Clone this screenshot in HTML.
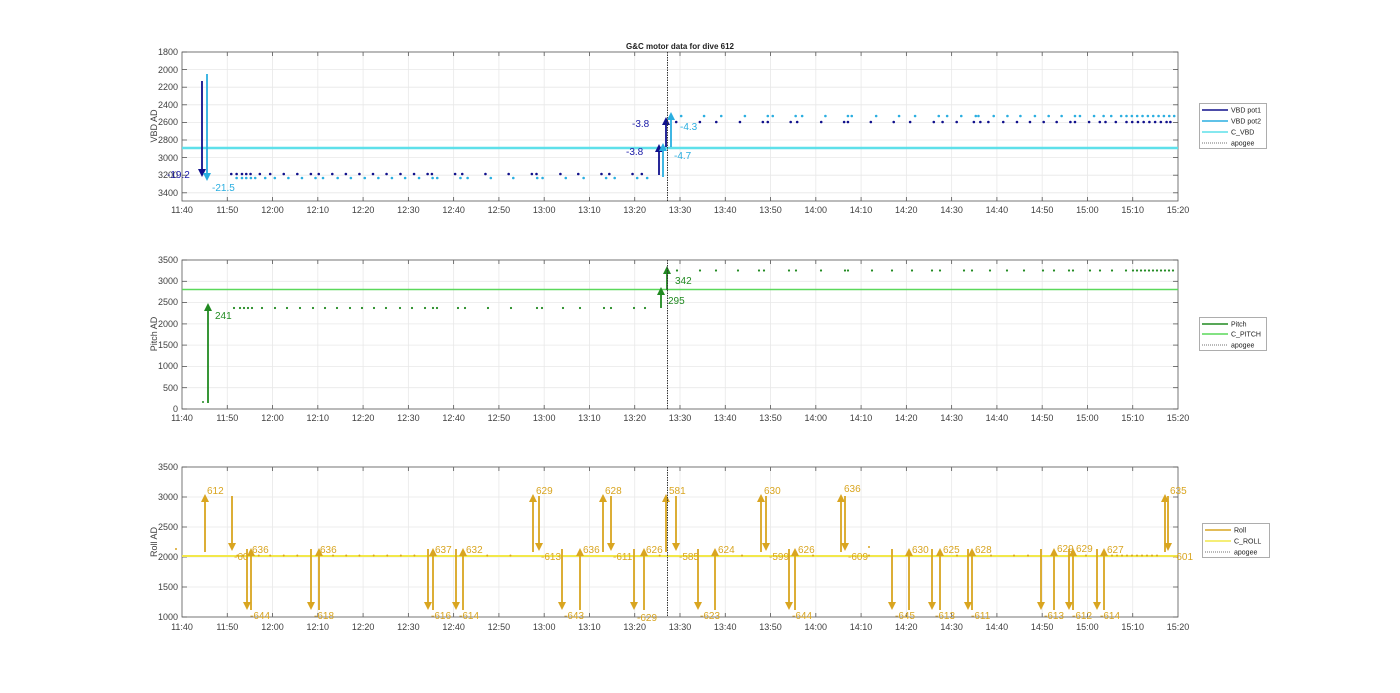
<!DOCTYPE html>
<html><head><meta charset="utf-8"><style>
html,body{margin:0;padding:0;background:#fff;}
svg{display:block;font-family:"Liberation Sans",sans-serif;}
.t{font-size:9px;fill:#404040;}
.xl{text-anchor:middle;}
.yl{text-anchor:end;}
.lg{font-size:7px;fill:#222;}
.ab{font-size:10px;}
</style></head><body>
<svg id="s" width="1400" height="693" viewBox="0 0 1400 693" xmlns="http://www.w3.org/2000/svg">
<rect width="1400" height="693" fill="#fff"/>
<g id="grid"></g>
<g id="data"></g>
<!-- title -->
<text x="680" y="49" font-size="8" font-weight="bold" text-anchor="middle" fill="#222">G&amp;C motor data for dive 612</text>
<!-- y axis labels -->
<text class="t" transform="translate(157,126) rotate(-90)" text-anchor="middle">VBD AD</text>
<text class="t" transform="translate(157,334) rotate(-90)" text-anchor="middle">Pitch AD</text>
<text class="t" transform="translate(157,542) rotate(-90)" text-anchor="middle">Roll AD</text>
<!-- panel 1 y ticks -->
<g class="t yl">
<text x="178" y="55">1800</text><text x="178" y="73">2000</text><text x="178" y="90">2200</text><text x="178" y="108">2400</text><text x="178" y="125">2600</text><text x="178" y="143">2800</text><text x="178" y="161">3000</text><text x="178" y="178">3200</text><text x="178" y="196">3400</text>
</g>
<!-- panel 2 y ticks -->
<g class="t yl">
<text x="178" y="263">3500</text><text x="178" y="284">3000</text><text x="178" y="305">2500</text><text x="178" y="327">2000</text><text x="178" y="348">1500</text><text x="178" y="369">1000</text><text x="178" y="391">500</text><text x="178" y="412">0</text>
</g>
<!-- panel 3 y ticks -->
<g class="t yl">
<text x="178" y="470">3500</text><text x="178" y="500">3000</text><text x="178" y="530">2500</text><text x="178" y="560">2000</text><text x="178" y="590">1500</text><text x="178" y="620">1000</text>
</g>
<!-- x tick labels -->
<g class="t xl" transform="translate(0,213)">
<text x="182">11:40</text><text x="227.3">11:50</text><text x="272.5">12:00</text><text x="317.8">12:10</text><text x="363.1">12:20</text><text x="408.4">12:30</text><text x="453.6">12:40</text><text x="498.9">12:50</text><text x="544.2">13:00</text><text x="589.4">13:10</text><text x="634.7">13:20</text><text x="680">13:30</text><text x="725.2">13:40</text><text x="770.5">13:50</text><text x="815.8">14:00</text><text x="861">14:10</text><text x="906.3">14:20</text><text x="951.6">14:30</text><text x="996.9">14:40</text><text x="1042.1">14:50</text><text x="1087.4">15:00</text><text x="1132.7">15:10</text><text x="1178">15:20</text>
</g>
<g class="t xl" transform="translate(0,421)">
<text x="182">11:40</text><text x="227.3">11:50</text><text x="272.5">12:00</text><text x="317.8">12:10</text><text x="363.1">12:20</text><text x="408.4">12:30</text><text x="453.6">12:40</text><text x="498.9">12:50</text><text x="544.2">13:00</text><text x="589.4">13:10</text><text x="634.7">13:20</text><text x="680">13:30</text><text x="725.2">13:40</text><text x="770.5">13:50</text><text x="815.8">14:00</text><text x="861">14:10</text><text x="906.3">14:20</text><text x="951.6">14:30</text><text x="996.9">14:40</text><text x="1042.1">14:50</text><text x="1087.4">15:00</text><text x="1132.7">15:10</text><text x="1178">15:20</text>
</g>
<g class="t xl" transform="translate(0,630)">
<text x="182">11:40</text><text x="227.3">11:50</text><text x="272.5">12:00</text><text x="317.8">12:10</text><text x="363.1">12:20</text><text x="408.4">12:30</text><text x="453.6">12:40</text><text x="498.9">12:50</text><text x="544.2">13:00</text><text x="589.4">13:10</text><text x="634.7">13:20</text><text x="680">13:30</text><text x="725.2">13:40</text><text x="770.5">13:50</text><text x="815.8">14:00</text><text x="861">14:10</text><text x="906.3">14:20</text><text x="951.6">14:30</text><text x="996.9">14:40</text><text x="1042.1">14:50</text><text x="1087.4">15:00</text><text x="1132.7">15:10</text><text x="1178">15:20</text>
</g>
<!-- arrow labels panel 1 -->
<g class="ab">
<text x="167" y="178" fill="#1a1aa8">-19.2</text>
<text x="212" y="191" fill="#2aaee0">-21.5</text>
<text x="626" y="155" fill="#1a1aa8">-3.8</text>
<text x="632" y="127" fill="#1a1aa8">-3.8</text>
<text x="674" y="159" fill="#2aaee0">-4.7</text>
<text x="680" y="130" fill="#2aaee0">-4.3</text>
</g>
<!-- arrow labels panel 2 -->
<g class="ab" fill="#218a21">
<text x="215" y="319">241</text>
<text x="668" y="304">295</text>
<text x="675" y="284">342</text>
</g>
<!-- arrow labels panel 3 -->
<g class="ab" fill="#d9a520">
<text x="207" y="494">612</text>
<text x="234" y="560">-60</text>
<text x="252" y="553">636</text>
<text x="250" y="619">-644</text>
<text x="314" y="619">-618</text>
<text x="320" y="553">636</text>
<text x="431" y="619">-616</text>
<text x="435" y="553">637</text>
<text x="459" y="619">-614</text>
<text x="466" y="553">632</text>
<text x="536" y="494">629</text>
<text x="541" y="560">-613</text>
<text x="564" y="619">-643</text>
<text x="583" y="553">636</text>
<text x="605" y="494">628</text>
<text x="613" y="560">-611</text>
<text x="637" y="621">-629</text>
<text x="646" y="553">626</text>
<text x="669" y="494">581</text>
<text x="679" y="560">-585</text>
<text x="700" y="619">-623</text>
<text x="718" y="553">624</text>
<text x="764" y="494">630</text>
<text x="769" y="560">-599</text>
<text x="792" y="619">-644</text>
<text x="798" y="553">626</text>
<text x="844" y="492">636</text>
<text x="848" y="560">-609</text>
<text x="895" y="619">-645</text>
<text x="912" y="553">630</text>
<text x="935" y="619">-613</text>
<text x="943" y="553">625</text>
<text x="971" y="619">-611</text>
<text x="975" y="553">628</text>
<text x="1044" y="619">-613</text>
<text x="1057" y="552">629</text>
<text x="1072" y="619">-612</text>
<text x="1076" y="552">629</text>
<text x="1100" y="619">-614</text>
<text x="1107" y="553">627</text>
<text x="1170" y="494">635</text>
<text x="1173" y="560">-601</text>
</g>
<!-- legends -->
<g>
<rect x="1199.5" y="103.5" width="67" height="45" fill="#fff" stroke="#999" stroke-width="0.8"/>
<line x1="1202" y1="110" x2="1228" y2="110" stroke="#10108c" stroke-width="1.5"/>
<line x1="1202" y1="121" x2="1228" y2="121" stroke="#2aaee0" stroke-width="1.5"/>
<line x1="1202" y1="132" x2="1228" y2="132" stroke="#5ee0ea" stroke-width="1.5"/>
<line x1="1202" y1="143" x2="1228" y2="143" stroke="#444" stroke-width="0.8" stroke-dasharray="1,1"/>
<text class="lg" x="1231" y="112.5">VBD pot1</text>
<text class="lg" x="1231" y="123.5">VBD pot2</text>
<text class="lg" x="1231" y="134.5">C_VBD</text>
<text class="lg" x="1231" y="145.5">apogee</text>

<rect x="1199.5" y="317.5" width="67" height="33" fill="#fff" stroke="#999" stroke-width="0.8"/>
<line x1="1202" y1="324" x2="1228" y2="324" stroke="#218a21" stroke-width="1.5"/>
<line x1="1202" y1="334" x2="1228" y2="334" stroke="#5ad85a" stroke-width="1.5"/>
<line x1="1202" y1="345" x2="1228" y2="345" stroke="#444" stroke-width="0.8" stroke-dasharray="1,1"/>
<text class="lg" x="1231" y="326.5">Pitch</text>
<text class="lg" x="1231" y="336.5">C_PITCH</text>
<text class="lg" x="1231" y="347.5">apogee</text>

<rect x="1202.5" y="523.5" width="67" height="34" fill="#fff" stroke="#999" stroke-width="0.8"/>
<line x1="1205" y1="530" x2="1231" y2="530" stroke="#d9a520" stroke-width="1.5"/>
<line x1="1205" y1="541" x2="1231" y2="541" stroke="#f2e84a" stroke-width="1.5"/>
<line x1="1205" y1="552" x2="1231" y2="552" stroke="#444" stroke-width="0.8" stroke-dasharray="1,1"/>
<text class="lg" x="1234" y="532.5">Roll</text>
<text class="lg" x="1234" y="543.5">C_ROLL</text>
<text class="lg" x="1234" y="554.5">apogee</text>
</g>
</svg>
<script>
(function(){
var NS="http://www.w3.org/2000/svg";
var grid=document.getElementById("grid"),data=document.getElementById("data");
function el(p,n,a){var e=document.createElementNS(NS,n);for(var k in a)e.setAttribute(k,a[k]);p.appendChild(e);return e;}
var X0=182,X1=1178,DX=(X1-X0)/22;
var panels=[{t:52,b:201,yt:[52,69.6,87.2,104.8,122.4,140,157.6,175.2,192.8]},
{t:260,b:409,yt:[260,281.3,302.6,323.9,345.1,366.4,387.7,409]},
{t:467,b:617,yt:[467,497,527,557,587,617]}];
panels.forEach(function(p){
 for(var i=1;i<22;i++){var x=X0+i*DX;el(grid,"line",{x1:x,x2:x,y1:p.t,y2:p.b,stroke:"#e8e8e8","stroke-width":0.8});
   el(grid,"line",{x1:x,x2:x,y1:p.b,y2:p.b-4,stroke:"#555","stroke-width":0.8});el(grid,"line",{x1:x,x2:x,y1:p.t,y2:p.t+4,stroke:"#555","stroke-width":0.8});}
 p.yt.forEach(function(y){el(grid,"line",{x1:X0,x2:X1,y1:y,y2:y,stroke:"#e8e8e8","stroke-width":0.8});
   el(grid,"line",{x1:X0,x2:X0+5,y1:y,y2:y,stroke:"#555","stroke-width":0.8});el(grid,"line",{x1:X1,x2:X1-5,y1:y,y2:y,stroke:"#555","stroke-width":0.8});});
 el(grid,"rect",{x:X0,y:p.t,width:X1-X0,height:p.b-p.t,fill:"none",stroke:"#555","stroke-width":0.8});
});
function dot(x,y,c,r){el(data,"circle",{cx:x,cy:y,r:r||1.3,fill:c});}
function arrow(x,y1,y2,c){var d=y2>y1?1:-1;el(data,"line",{x1:x,x2:x,y1:y1,y2:y2-d*6,stroke:c,"stroke-width":1.8});
 el(data,"polygon",{points:(x-4)+","+(y2-d*8)+" "+(x+4)+","+(y2-d*8)+" "+x+","+y2,fill:c});}
// panel 1
var DB="#10108c",LB="#2aaee0";
el(data,"line",{x1:X0,x2:X1,y1:148,y2:148,stroke:"#5ee0ea","stroke-width":2.5});
var z1d=[263,278,293,305,317,343,372,410,448,486,508,546,584,622,660,698,737,775,813,825,890,910,975,1040,1105,1118,1185,1235,1300,1322,1387,1413];
var z1l=[278,293,305,318,330,358,385,423,461,499,520,561,598,637,675,713,750,789,827,840,905,925,990,1053,1120,1135,1200,1250,1313,1337,1400,1428];
z1d.forEach(function(z){dot(182+(z-125)*0.357,174,DB);});
z1l.forEach(function(z){dot(182+(z-125)*0.357,178,LB);});
var z2d=[200,262,305,367,427,440,500,517,580,640,650,710,770,813,875,898,935,980,997,1018,1057,1093,1127,1163,1197,1233,1245,1282,1310,1325,1352,1380,1395,1410,1425,1440,1455,1470,1485,1495];
var z2l=[213,273,318,380,440,453,513,530,591,650,660,724,784,826,888,910,947,985,992,1032,1068,1102,1140,1176,1210,1245,1258,1295,1320,1340,1366,1380,1394,1408,1422,1436,1450,1464,1478,1492,1505];
z2d.forEach(function(z){dot(635+(z-92)*0.3816,122,DB);});
z2l.forEach(function(z){dot(635+(z-92)*0.3816,116,LB);});
arrow(202,81,177,DB);arrow(207,74,181,LB);
arrow(659,175,144,DB);arrow(666,147,117,DB);
arrow(663,177,143,LB);arrow(671,147,112,LB);
// panel 2
var G="#218a21";
el(data,"line",{x1:X0,x2:X1,y1:289.5,y2:289.5,stroke:"#5ad85a","stroke-width":1.5});
[234,240,244,248,252,262,275,287,300,313,325,337,350,362,374,386,400,412,425,433,437,458,465,488,511,537,542,563,580,604,611,634,645].forEach(function(x){dot(x,308,G,1.1);});
[677,700,716,738,759,764,789,796,821,845,848,872,892,912,932,940,964,972,990,1007,1024,1043,1054,1069,1073,1090,1100,1112,1126,1133,1137,1141,1145,1149,1153,1157,1161,1165,1169,1173].forEach(function(x){dot(x,270.5,G,1.1);});
dot(203,402,G,1);
arrow(208,403,303,G);arrow(661,308,287,G);arrow(667,290,266,G);
// panel 3
var O="#d9a520";
el(data,"line",{x1:X0,x2:X1,y1:556,y2:556,stroke:"#f2e84a","stroke-width":2});
[280,295,340,372,410,448,548,585,622,662,700,738,776,980,1045,1463].forEach(function(z){dot(182+(z-125)*0.357,555.5,O,1);});
dot(176,549,O,1);
[742,813,869,957,991,1014,1028,1086].forEach(function(x){dot(x,555.5,O,1);});
for(var x=1112;x<1162;x+=5)dot(x,555.5,O,1);
dot(869,547,O,1);
var UP_HI=[205,533,603,666,761,841,1165], DN_HI=[232,539,611,676,766,845,1168];
UP_HI.forEach(function(x){arrow(x,552,494,O);});
DN_HI.forEach(function(x){arrow(x,496,551,O);});
var DN_LO=[247,311,428,456,562,634,698,789,892,932,968,1041,1069,1097];
var UP_LO=[251,319,433,463,580,644,715,795,909,940,972,1054,1073,1104];
DN_LO.forEach(function(x){arrow(x,549,610,O);});
UP_LO.forEach(function(x){arrow(x,610,548,O);});
// apogee lines
panels.forEach(function(p){el(data,"line",{x1:667.5,x2:667.5,y1:p.t,y2:p.b,stroke:"#333","stroke-width":1,"stroke-dasharray":"1.5,1"});});
})();
</script>
</body></html>
